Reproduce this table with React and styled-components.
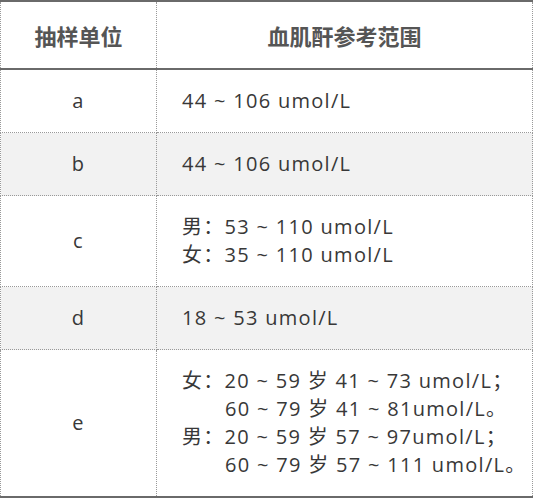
import styled, { createGlobalStyle } from 'styled-components';

const GlobalStyle = createGlobalStyle`
    html, body {
        margin: 0;
        padding: 0;
        background: #fff;
    }
    body {
        font-family: "Open Sans", "Noto Sans CJK SC", sans-serif;
    }
`;

const Table = styled.table`
    width: 533px;
    border-collapse: collapse;
    border-top: 2px solid #6a6a6a;
    border-bottom: 2px solid #6a6a6a;
    color: #383838;
`;

const HeadCell = styled.th`
    height: 66px;
    padding: 0;
    font-size: 22px;
    font-weight: bold;
    color: #555;
    text-align: center;
    border-left: 1px dotted #999;
    border-right: 1px dotted #999;
    border-bottom: 2px solid #6a6a6a;
    font-family: "Noto Sans CJK SC", sans-serif;
`;

const Row = styled.tr`
    background: ${p => (p.$shaded ? '#f2f2f2' : '#fff')};
`;

const Cell = styled.td`
    padding: 17px 0;
    font-size: 20px;
    line-height: 28px;
    letter-spacing: 1.3px;
    border: 1px dotted #999;
    text-align: ${p => (p.$center ? 'center' : 'left')};
    padding-left: ${p => (p.$center ? '0' : '25px')};
    width: ${p => (p.$center ? '155px' : 'auto')};
`;

const Line = styled.div`
    padding-left: ${p => (p.$indent ? '43px' : '0')};
    white-space: nowrap;
`;

const rows = [
    { unit: 'a', lines: ['44 ~ 106 umol/L'] },
    { unit: 'b', lines: ['44 ~ 106 umol/L'] },
    { unit: 'c', lines: ['男：53 ~ 110 umol/L', '女：35 ~ 110 umol/L'] },
    { unit: 'd', lines: ['18 ~ 53 umol/L'] },
    {
        unit: 'e',
        lines: [
            '女：20 ~ 59 岁 41 ~ 73 umol/L；',
            { text: '60 ~ 79 岁 41 ~ 81umol/L。', indent: true },
            '男：20 ~ 59 岁 57 ~ 97umol/L；',
            { text: '60 ~ 79 岁 57 ~ 111 umol/L。', indent: true },
        ],
    },
];

const App = () => {
    return (
        <>
            <GlobalStyle />
            <Table>
                <thead>
                    <tr>
                        <HeadCell>抽样单位</HeadCell>
                        <HeadCell>血肌酐参考范围</HeadCell>
                    </tr>
                </thead>
                <tbody>
                    {rows.map((row, i) => (
                        <Row key={row.unit} $shaded={i % 2 === 1}>
                            <Cell $center>{row.unit}</Cell>
                            <Cell>
                                {row.lines.map((line, j) =>
                                    typeof line === 'string'
                                        ? <Line key={j}>{line}</Line>
                                        : <Line key={j} $indent>{line.text}</Line>
                                )}
                            </Cell>
                        </Row>
                    ))}
                </tbody>
            </Table>
        </>
    );
};

export default App;
